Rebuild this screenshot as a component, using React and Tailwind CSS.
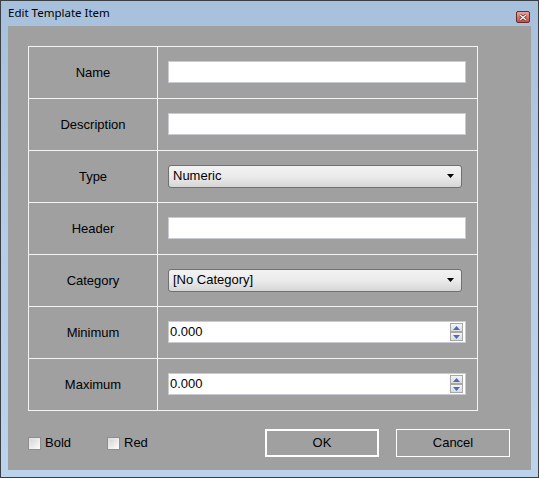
import React from "react";

const font = { fontFamily: '"Liberation Sans", Arial, sans-serif' };

function TextBox() {
  return <div className="w-[298px] h-[22px] bg-white border border-[#c9cbd2]" />;
}

function Combo({ value }) {
  return (
    <div className="w-[294px] h-[23px] rounded-[3px] border border-[#707070] bg-gradient-to-b from-[#f2f2f2] via-[#ebebeb] to-[#d6d6d6] flex items-center pl-[4px] pr-[7px] text-[13px] text-black">
      <span className="flex-1">{value}</span>
      <svg width="7" height="4" viewBox="0 0 7 4"><path d="M0 0H7L3.5 4Z" fill="#000" /></svg>
    </div>
  );
}

function Numeric({ value }) {
  return (
    <div className="w-[298px] h-[22px] bg-white border border-[#c9cbd2] flex items-center pl-[1px] pr-[2px] text-[13px] text-black">
      <span className="flex-1">{value}</span>
      <div className="flex flex-col gap-0">
        <div className="w-[13px] h-[9px] border border-[#a8a8a8] bg-gradient-to-b from-[#f4f4f4] to-[#dcdcdc] flex items-center justify-center">
          <svg width="7" height="4" viewBox="0 0 7 4"><path d="M3.5 0L7 4H0Z" fill="#4d6bb8" /></svg>
        </div>
        <div className="w-[13px] h-[9px] border border-[#a8a8a8] bg-gradient-to-b from-[#f4f4f4] to-[#dcdcdc] flex items-center justify-center">
          <svg width="7" height="4" viewBox="0 0 7 4"><path d="M0 0H7L3.5 4Z" fill="#4d6bb8" /></svg>
        </div>
      </div>
    </div>
  );
}

function Row({ label, children }) {
  return (
    <div className="flex h-[52px]">
      <div className="w-[129px] border-r border-b border-[#f4f4f4] flex items-center justify-center text-[13px] text-black">
        {label}
      </div>
      <div className="w-[320px] border-r border-b border-[#f4f4f4] flex items-center pl-[10px] pb-[1px]">
        {children}
      </div>
    </div>
  );
}

function Check({ label }) {
  return (
    <div className="flex items-center gap-[4px] text-[13px] text-black">
      <div className="w-[13px] h-[13px] border border-[#8f8f8f] bg-gradient-to-br from-[#dcdcdc] to-[#fbfbfb] p-[2px]">
        <div className="w-full h-full bg-gradient-to-br from-[#d8d8d8] to-[#f6f6f6]" />
      </div>
      <span>{label}</span>
    </div>
  );
}

export default function App() {
  return (
    <div className="w-[539px] h-[478px] border border-[#3a3f44] bg-gradient-to-b from-[#a7c0dc] via-[#b6cde8] to-[#bcd3ec] flex flex-col" style={font}>
      <div className="h-[25px] flex items-start pl-[7px] pr-[8px] pt-[4px]">
        <span className="flex-1 text-black leading-[16px]" style={{ fontFamily: '"Noto Sans", "Open Sans", sans-serif', fontSize: '11.5px' }}>Edit Template Item</span>
        <div className="mt-[6px] w-[14px] h-[12px] rounded-[2px] border border-[#6b2a2a] bg-gradient-to-b from-[#e8a4a0] to-[#c84a44] flex items-center justify-center">
          <svg width="8" height="7" viewBox="0 0 8 7">
            <path d="M1 1L7 6M7 1L1 6" stroke="#4a1c1c" strokeWidth="2.6" />
            <path d="M1 1L7 6M7 1L1 6" stroke="#ffffff" strokeWidth="1.4" />
          </svg>
        </div>
      </div>
      <div className="mx-[7px] mb-[7px] flex-1 bg-[#a0a0a0] flex flex-col pt-[20px] pl-[20px]">
        <div className="w-[450px] border-l border-t border-[#f4f4f4] flex flex-col">
          <Row label="Name"><TextBox /></Row>
          <Row label="Description"><TextBox /></Row>
          <Row label="Type"><Combo value="Numeric" /></Row>
          <Row label="Header"><TextBox /></Row>
          <Row label="Category"><Combo value="[No Category]" /></Row>
          <Row label="Minimum"><Numeric value="0.000" /></Row>
          <Row label="Maximum"><Numeric value="0.000" /></Row>
        </div>
        <div className="flex items-center mt-[18px]">
          <div className="w-[79px]"><Check label="Bold" /></div>
          <Check label="Red" />
          <div className="flex-1" />
          <button className="w-[114px] h-[28px] border-2 border-white text-[13px] text-black mr-[17px]">OK</button>
          <button className="w-[114px] h-[28px] border border-white text-[13px] text-black mr-[21px]">Cancel</button>
        </div>
      </div>
    </div>
  );
}
